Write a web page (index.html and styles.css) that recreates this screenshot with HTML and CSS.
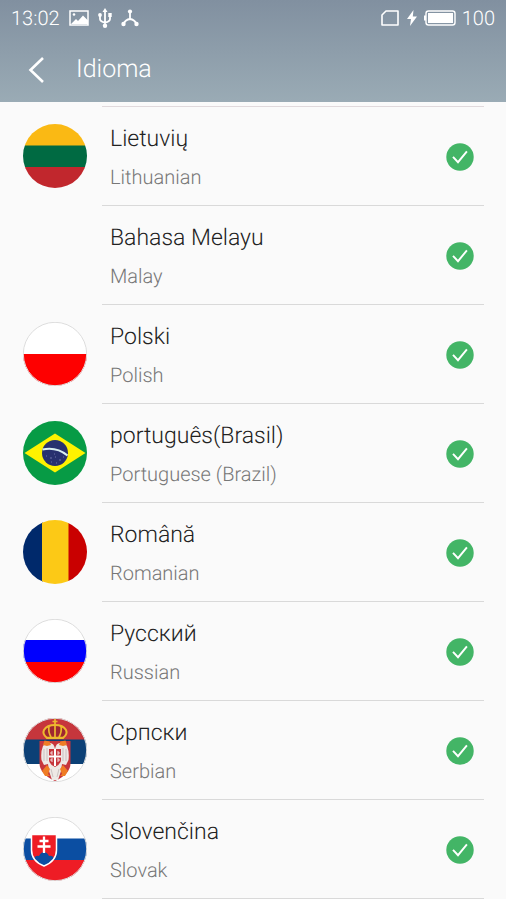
FILE: index.html
```html
<!DOCTYPE html>
<html lang="es">
<head>
<meta charset="utf-8">
<meta name="viewport" content="width=device-width, initial-scale=1">
<title>Idioma</title>
<link rel="stylesheet" href="styles.css">
</head>
<body>
<svg class="defs" aria-hidden="true">
  <defs>
    <clipPath id="round"><circle cx="32" cy="32" r="32"/></clipPath>
    <symbol id="check" viewBox="0 0 28 28">
      <circle cx="14" cy="14" r="13.700" fill="#43b566"/>
      <path d="M7 13.800l5 5.400L20.900 8.300" fill="none" stroke="#fff" stroke-width="1.900"/>
    </symbol>
  </defs>
</svg>
<header class="top">
  <div class="status">
    <div class="group">
      <span>13:02</span>
      <svg width="20" height="18" viewBox="0 0 20 18"><path d="M1 2h18v14H1z" fill="none" stroke="#fff" stroke-width="1.500"/><path d="M2 15l5-5 2 2 5-5.500 5 5V15z" fill="#fff"/><circle cx="5" cy="5.500" r="1.300" fill="#fff"/></svg>
      <svg width="14" height="20" viewBox="0 0 14 20" fill="none" stroke="#fff" stroke-width="1.800"><path d="M7 3v14M2 7v4q0 2.500 5 3.500M12 6v5q0 2.500-5 3.500"/><g fill="#fff" stroke="none"><path d="M7 0l2.500 4h-5zM10.300 5h3.400v4h-3.400z"/><circle cx="2" cy="7" r="1.900"/><circle cx="7" cy="17.700" r="2.200"/></g></svg>
      <svg width="18" height="18" viewBox="0 0 18 18"><path d="M9 3v7M2.500 15q2-4.500 6.500-5 4.500 .5 6.500 5" fill="none" stroke="#fff" stroke-width="1.800"/><g fill="#fff"><circle cx="9" cy="2.500" r="2.100"/><circle cx="2.500" cy="15" r="2.200"/><circle cx="15.500" cy="15" r="2.200"/></g></svg>
    </div>
    <div class="group right">
      <svg width="20" height="18" viewBox="0 0 20 18"><path d="M6 2h12v14H2V6z" fill="none" stroke="#fff" stroke-width="1.600" stroke-linejoin="round"/></svg>
      <svg width="12" height="18" viewBox="0 0 12 18"><path d="M7.500 1L1 10h4l-1 7 7-9.500H6.800z" fill="#fff"/></svg>
      <svg width="32" height="18" viewBox="0 0 32 18"><rect x="2" y="2" width="29" height="14" rx="2.500" fill="none" stroke="#fff" stroke-width="1.400"/><path d="M0 6.500h2v5H0zM4 4h25v10H4z" fill="#fff"/></svg>
      <span>100</span>
    </div>
  </div>
  <div class="bar">
    <button class="back" type="button" aria-label="Atrás"><svg width="18" height="28" viewBox="0 0 18 28"><path d="M15 2L2.500 14 15 26" fill="none" stroke="#fff" stroke-width="2.600"/></svg></button>
    <h1>Idioma</h1>
  </div>
</header>
<main>
<ul class="list">
  <li class="row">
    <svg class="flag" viewBox="0 0 64 64"><g clip-path="url(#round)"><path d="M0 0h64v22H0z" fill="#fab914"/><path d="M0 21.500h64V43H0z" fill="#006a42"/><path d="M0 43h64v21H0z" fill="#c1272d"/></g></svg>
    <div class="info"><div class="names"><span class="name" lang="lt">Lietuvių</span><span class="sub">Lithuanian</span></div><svg class="check"><use href="#check"/></svg></div>
  </li>
  <li class="row">
    <span class="flag"></span>
    <div class="info"><div class="names"><span class="name" lang="ms">Bahasa Melayu</span><span class="sub">Malay</span></div><svg class="check"><use href="#check"/></svg></div>
  </li>
  <li class="row">
    <svg class="flag" viewBox="0 0 64 64"><g clip-path="url(#round)"><path d="M0 0h64v64H0z" fill="#fff"/><path d="M0 32h64v32H0z" fill="#fe0000"/></g><circle class="rim" cx="32" cy="32" r="31.700"/></svg>
    <div class="info"><div class="names"><span class="name" lang="pl">Polski</span><span class="sub">Polish</span></div><svg class="check"><use href="#check"/></svg></div>
  </li>
  <li class="row">
    <svg class="flag" viewBox="0 0 64 64"><circle cx="32" cy="32" r="32" fill="#079b45"/><path d="M1.500 32L32 12.500 62.500 32 32 51.500z" fill="#fff200"/><circle cx="32" cy="32" r="13" fill="#28316f"/><path d="M19.500 28.500q14-3 25 6" fill="none" stroke="#d9eef0" stroke-width="2.200"/><path d="M23 35h1M27 37h2M32 36h1M36 39h2M28 41h1M33 42h1M40 36h1M31 33h1" stroke="#6d75a8"/></svg>
    <div class="info"><div class="names"><span class="name" lang="pt">português(Brasil)</span><span class="sub">Portuguese (Brazil)</span></div><svg class="check"><use href="#check"/></svg></div>
  </li>
  <li class="row">
    <svg class="flag" viewBox="0 0 64 64"><g clip-path="url(#round)"><path d="M0 0h20v64H0z" fill="#00296b"/><path d="M19 0h27v64H19z" fill="#fcc916"/><path d="M45.500 0H64v64H45.500z" fill="#c90000"/></g></svg>
    <div class="info"><div class="names"><span class="name" lang="ro">Română</span><span class="sub">Romanian</span></div><svg class="check"><use href="#check"/></svg></div>
  </li>
  <li class="row">
    <svg class="flag" viewBox="0 0 64 64"><g clip-path="url(#round)"><path d="M0 0h64v64H0z" fill="#fff"/><path d="M0 21h64v22H0z" fill="#0000fe"/><path d="M0 43h64v21H0z" fill="#fe0000"/></g><circle class="rim" cx="32" cy="32" r="31.700"/></svg>
    <div class="info"><div class="names"><span class="name" lang="ru">Русский</span><span class="sub">Russian</span></div><svg class="check"><use href="#check"/></svg></div>
  </li>
  <li class="row">
    <svg class="flag" viewBox="0 0 64 64"><g clip-path="url(#round)"><path d="M0 0h64v64H0z" fill="#fff"/><path d="M0 0h64v22H0z" fill="#c6363c"/><path d="M0 21.500h64V46H0z" fill="#0c4076"/></g><circle class="rim" cx="32" cy="32" r="31.700"/>
      <path d="M16.500 23h31v22q0 11-15.500 18-15.500-7-15.500-18z" fill="#c6363c"/>
      <path d="M24 20q-5-4-3-8 3-5 11-5 8 0 11 5 2 4-3 8z" fill="#9f2630" stroke="#edb92e" stroke-width="2"/>
      <path d="M23 19.500h18M32 6v13M26 8q-1 6 2 11M38 8q1 6-2 11" fill="none" stroke="#edb92e" stroke-width="1.700"/>
      <path d="M32 1v6M29.500 3.500h5" stroke="#edb92e" stroke-width="1.700"/>
      <path d="M32 31q-1-6-5-6-5 0-7 3-2.500 6-1.500 14l2.500 5 4-1 1 7 3 9h6l3-9 1-7 4 1 2.500-5q1-8-1.500-14-2-3-7-3-4 0-5 6z" fill="#eee9e5"/>
      <path d="M21 31v12M24 30v13M43 31v12M40 30v13M28 51l2 8M36 51l-2 8" stroke="#b9b1b1" stroke-width=".7"/>
      <path d="M20 27l1.500-4.500 5 1L28 27l-4 1zM44 27l-1.500-4.500-5 1L36 27l4 1zM19 53l5-6 3 4-2 5 2 2-5 0zM45 53l-5-6-3 4 2 5-2 2 5 0z" fill="#ef7d25"/>
      <path d="M26 31h12v11q0 4-6 7-6-3-6-7z" fill="#c6363c"/><path d="M32 31v17M26 38.500h12" stroke="#fff" stroke-width="2"/><path d="M30 34h-2v2h2M34 34h2v2h-2M30 41h-2v2h2M34 41h2v2h-2" fill="none" stroke="#fff" stroke-width=".8"/>
    </svg>
    <div class="info"><div class="names"><span class="name" lang="sr">Српски</span><span class="sub">Serbian</span></div><svg class="check"><use href="#check"/></svg></div>
  </li>
  <li class="row">
    <svg class="flag" viewBox="0 0 64 64"><g clip-path="url(#round)"><path d="M0 0h64v64H0z" fill="#fff"/><path d="M0 21.500h64V43H0z" fill="#0b4ea2"/><path d="M0 43h64v21H0z" fill="#ee1c25"/></g><circle class="rim" cx="32" cy="32" r="31.700"/>
      <path d="M8.500 17.500h25V33q0 11-12.500 16Q8.500 44 8.500 33z" fill="#ee1c25"/><path d="M11 41q2-3 5-2 2-4 5-4t5 4q3-1 5 2-4 5-10 8-6-3-10-8z" fill="#0b4ea2"/><path d="M8.500 17.500h25V33q0 11-12.500 16Q8.500 44 8.500 33z" fill="none" stroke="#fff" stroke-width="1.500"/><path d="M21 19.500V36M16.500 24h9M14.500 29.500h13" stroke="#fff" stroke-width="2.300"/></svg>
    <div class="info"><div class="names"><span class="name" lang="sk">Slovenčina</span><span class="sub">Slovak</span></div><svg class="check"><use href="#check"/></svg></div>
  </li>
</ul>
</main>
</body>
</html>
```
FILE: styles.css
```css
* {
  box-sizing: border-box;
}

body {
  margin: 0;
  background: #fafafa;
  color: #222;
  font-family: Roboto, "Noto Sans", sans-serif;
  font-weight: 300;
  text-rendering: geometricPrecision;
}

svg {
  display: block;
  flex: none;
}

.defs {
  position: absolute;
  width: 0;
  height: 0;
}

.top {
  background: linear-gradient(#8190a0, #9aabb5);
  color: #fff;
}

.status {
  display: flex;
  justify-content: space-between;
  height: 35px;
  padding: 0 11px;
  font-size: 20px;
}

.group {
  display: flex;
  align-items: center;
  gap: 9px;
}

.right {
  gap: 6px;
}

.bar {
  display: flex;
  align-items: center;
  height: 67px;
  padding: 2px 24px 0 20px;
}

.back {
  width: 56px;
  height: 56px;
  padding: 0 8px;
  border: 0;
  background: none;
  cursor: pointer;
}

h1 {
  margin: 0;
  font-size: 25px;
  font-weight: 300;
}

.list {
  margin: 0;
  padding: 4px 22px 0 23px;
  list-style: none;
}

.row {
  display: flex;
  align-items: center;
  gap: 15px;
}

.flag {
  flex: none;
  width: 64px;
  height: 64px;
  margin-bottom: 1px;
}

.rim {
  fill: none;
  stroke: #ddd;
  stroke-width: 1;
}

.info {
  display: flex;
  flex: 1;
  align-items: center;
  justify-content: space-between;
  min-height: 99px;
  padding: 2px 10px 0 8px;
  border-bottom: 1px solid #d9d9d9;
}

.row:first-child .info {
  min-height: 100px;
  border-top: 1px solid #e0d9dc;
}

.names {
  display: flex;
  flex-direction: column;
  gap: 10px;
}

.name {
  font-size: 23px;
  line-height: 30px;
}

.sub {
  color: #777;
  font-size: 20px;
  line-height: 26px;
}

.check {
  width: 28px;
  height: 28px;
}
```
